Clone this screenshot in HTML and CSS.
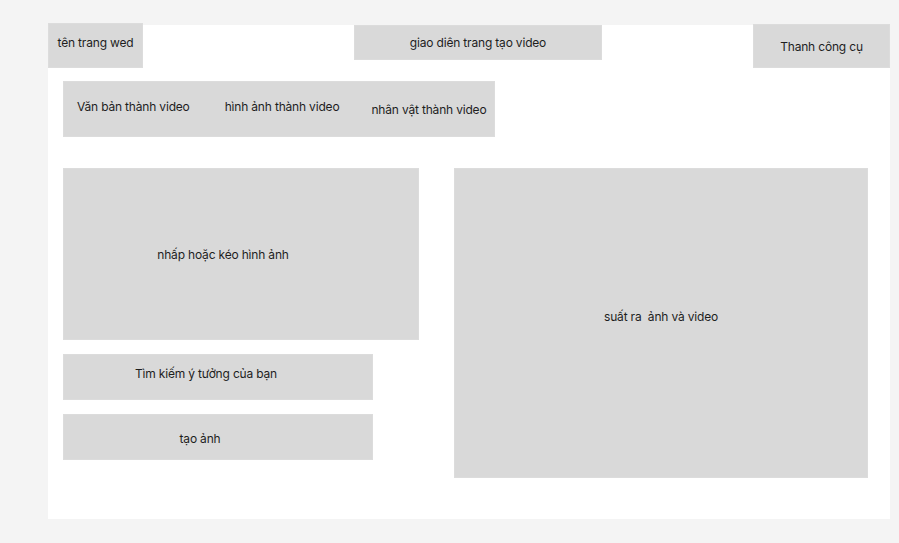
FILE: index.html
```html
<!DOCTYPE html>
<html lang="vi">
<head>
<meta charset="utf-8">
<title>giao diên trang tạo video</title>
<link rel="stylesheet" href="styles.css">
</head>
<body>
<div class="panel">
  <header class="header">
    <div class="box site-name">tên trang wed</div>
    <div class="box page-title">giao diên trang tạo video</div>
    <div class="box toolbar">Thanh công cụ</div>
  </header>
  <nav class="box tabs">
    <span class="tab tab-1">Văn bản thành video</span>
    <span class="tab tab-2">hình ảnh thành video</span>
    <span class="tab tab-3">nhân vật thành video</span>
  </nav>
  <main class="main">
    <section class="left-col">
      <div class="box upload">nhấp hoặc kéo hình ảnh</div>
      <div class="box search">Tìm kiếm ý tưởng của bạn</div>
      <div class="box create">tạo ảnh</div>
    </section>
    <section class="box output"><span class="pre">suất ra  ảnh và video</span></section>
  </main>
</div>
</body>
</html>
```

FILE: styles.css
```css
* { box-sizing: border-box; }
html, body { margin: 0; padding: 0; }
body {
  background: #f4f4f4;
  font-family: Inter, "Noto Sans", "Liberation Sans", sans-serif;
  font-size: 12px;
  letter-spacing: -0.18px;
  color: #1e1e1e;
  width: 899px;
  height: 543px;
  overflow: hidden;
}
.panel {
  display: flow-root;
  margin: 25px 0 0 48px;
  width: 842px;
  height: 494px;
  background: #ffffff;
}
.box {
  background: #d9d9d9;
  box-shadow: inset 0 0 0 1px #dcdcdc;
  display: flex;
  align-items: center;
  justify-content: center;
  white-space: nowrap;
}
.header {
  display: flex;
  align-items: flex-start;
  margin-top: -2px;
}
.site-name {
  width: 95px;
  height: 45px;
  padding-bottom: 7px;
}
.page-title {
  margin-left: 211px;
  margin-top: 2px;
  width: 248px;
  height: 35px;
}
.toolbar {
  margin-left: 151px;
  margin-top: 1px;
  width: 137px;
  height: 44px;
}
.tabs {
  margin: 13px 0 0 15px;
  width: 432px;
  height: 56px;
  justify-content: flex-start;
  padding-left: 14px;
}
.tab-1, .tab-2 { padding-bottom: 6px; }
.tab-2 { margin-left: 35px; }
.tab-3 { margin-left: 32px; padding-top: 1px; }
.main {
  display: flex;
  align-items: flex-start;
  margin: 31px 0 0 15px;
  gap: 35px;
}
.left-col {
  display: flex;
  flex-direction: column;
  gap: 14px;
  width: 356px;
}
.upload {
  height: 172px;
  padding-right: 36px;
}
.search {
  width: 310px;
  height: 46px;
  padding-right: 24px;
  padding-bottom: 8px;
}
.create {
  width: 310px;
  height: 46px;
  padding-right: 36px;
  padding-top: 2px;
}
.output {
  width: 414px;
  height: 310px;
  padding-bottom: 14px;
}
.pre { white-space: pre; }
```
